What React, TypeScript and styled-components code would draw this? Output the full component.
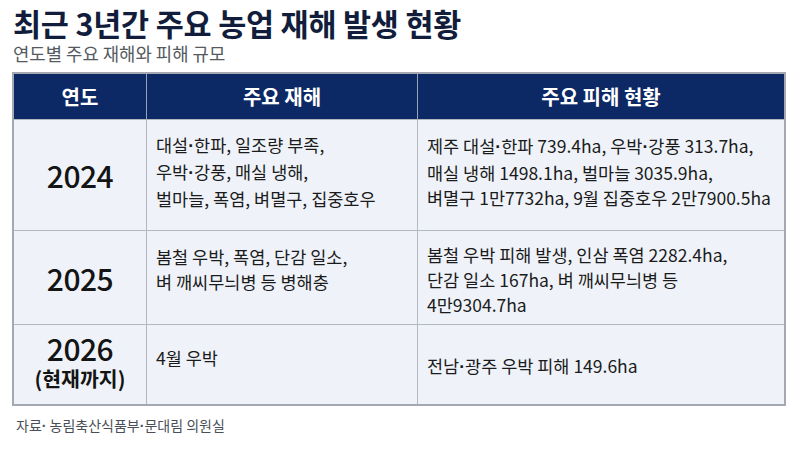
import React from "react";
import styled, { createGlobalStyle } from "styled-components";

const Global = createGlobalStyle`
  html, body { margin: 0; padding: 0; background: #ffffff; }
  body { font-family: "Noto Sans CJK KR", "Noto Sans", sans-serif; }
`;

const Page = styled.div`
  width: 800px;
  height: 450px;
  box-sizing: border-box;
  padding: 4px 14px 0 12px;
  display: flex;
  flex-direction: column;
  overflow: hidden;
`;

const Title = styled.h1`
  margin: 0;
  padding-left: 1px;
  font-size: 30.5px;
  line-height: 38px;
  font-weight: 700;
  color: #111d3b;
  letter-spacing: -0.2px;
`;

const Subtitle = styled.div`
  padding-left: 1px;
  font-size: 17.8px;
  line-height: 22px;
  color: #555a61;
`;

const Table = styled.table`
  margin-top: 8px;
  width: 768px;
  border-collapse: collapse;
  table-layout: fixed;
  border: 2px solid #a4a8b0;
`;

const HeadCell = styled.th<{ $w: number }>`
  width: ${(p) => p.$w}px;
  height: 45px;
  padding: 0;
  background: #0c2966;
  color: #ffffff;
  font-size: 20px;
  font-weight: 700;
  text-align: center;
  border-left: 1px solid #9aa3b5;
  &:first-child { border-left: none; }
`;

const Row = styled.tr<{ $h: number }>`
  height: ${(p) => p.$h}px;
`;

const Cell = styled.td<{ $top?: number; $bottom?: number; $align?: "top" | "middle" }>`
  padding: ${(p) => p.$top ?? 0}px 4px ${(p) => p.$bottom ?? 0}px 9px;
  background: #eff3f9;
  border: 1px solid #b3b8c0;
  vertical-align: ${(p) => p.$align ?? "middle"};
  font-size: 17.5px;
  line-height: 25px;
  color: #1b1b1b;
`;

const YearCell = styled(Cell)`
  text-align: center;
  padding-left: 0;
  padding-right: 0;
`;

const Year = styled.div`
  font-size: 30px;
  line-height: 30px;
  font-weight: 500;
  color: #141414;
  letter-spacing: -0.5px;
`;

const YearNote = styled.div`
  font-size: 20.5px;
  line-height: 30px;
  font-weight: 700;
  color: #141414;
`;

const Line = styled.div`
  white-space: nowrap;
`;

const Dot = styled.span`
  font-family: "Liberation Sans", sans-serif;
  font-weight: 700;
`;

const Source = styled.div`
  margin-top: 9px;
  padding-left: 4px;
  font-size: 14px;
  line-height: 20px;
  color: #4a4f57;
`;

function Text({ s }: { s: string }) {
  const parts = s.split("·");
  return (
    <>
      {parts.map((p, i) => (
        <React.Fragment key={i}>
          {i > 0 && <Dot>·</Dot>}
          {p}
        </React.Fragment>
      ))}
    </>
  );
}

function Lines({ items }: { items: string[] }) {
  return (
    <>
      {items.map((l) => (
        <Line key={l}>
          <Text s={l} />
        </Line>
      ))}
    </>
  );
}

const rows = [
  {
    year: "2024",
    disasters: ["대설·한파, 일조량 부족,", "우박·강풍, 매실 냉해,", "벌마늘, 폭염, 벼멸구, 집중호우"],
    damages: [
      "제주 대설·한파 739.4ha, 우박·강풍 313.7ha,",
      "매실 냉해 1498.1ha, 벌마늘 3035.9ha,",
      "벼멸구 1만7732ha, 9월 집중호우 2만7900.5ha",
    ],
  },
  {
    year: "2025",
    disasters: ["봄철 우박, 폭염, 단감 일소,", "벼 깨씨무늬병 등 병해충"],
    damages: ["봄철 우박 피해 발생, 인삼 폭염 2282.4ha,", "단감 일소 167ha, 벼 깨씨무늬병 등", "4만9304.7ha"],
  },
];

export default function App() {
  return (
    <>
      <Global />
      <Page>
        <Title>최근 3년간 주요 농업 재해 발생 현황</Title>
        <Subtitle>연도별 주요 재해와 피해 규모</Subtitle>
        <Table>
          <thead>
            <tr>
              <HeadCell $w={132}>연도</HeadCell>
              <HeadCell $w={270}>주요 재해</HeadCell>
              <HeadCell $w={366}>주요 피해 현황</HeadCell>
            </tr>
          </thead>
          <tbody>
            <Row $h={111}>
              <YearCell>
                <Year>{rows[0].year}</Year>
              </YearCell>
              <Cell $bottom={8}>
                <Lines items={rows[0].disasters} />
              </Cell>
              <Cell $bottom={8}>
                <Lines items={rows[0].damages} />
              </Cell>
            </Row>
            <Row $h={94}>
              <YearCell>
                <Year>{rows[1].year}</Year>
              </YearCell>
              <Cell $align="top" $top={13}>
                <Lines items={rows[1].disasters} />
              </Cell>
              <Cell $align="top" $top={11}>
                <Lines items={rows[1].damages} />
              </Cell>
            </Row>
            <Row $h={80}>
              <YearCell $bottom={2}>
                <Year>2026</Year>
                <YearNote>(현재까지)</YearNote>
              </YearCell>
              <Cell $bottom={14}>
                <Line>4월 우박</Line>
              </Cell>
              <Cell $top={4}>
                <Lines items={["전남·광주 우박 피해 149.6ha"]} />
              </Cell>
            </Row>
          </tbody>
        </Table>
        <Source>
          자료<Dot>·</Dot> 농림축산식품부<Dot>·</Dot>문대림 의원실
        </Source>
      </Page>
    </>
  );
}
